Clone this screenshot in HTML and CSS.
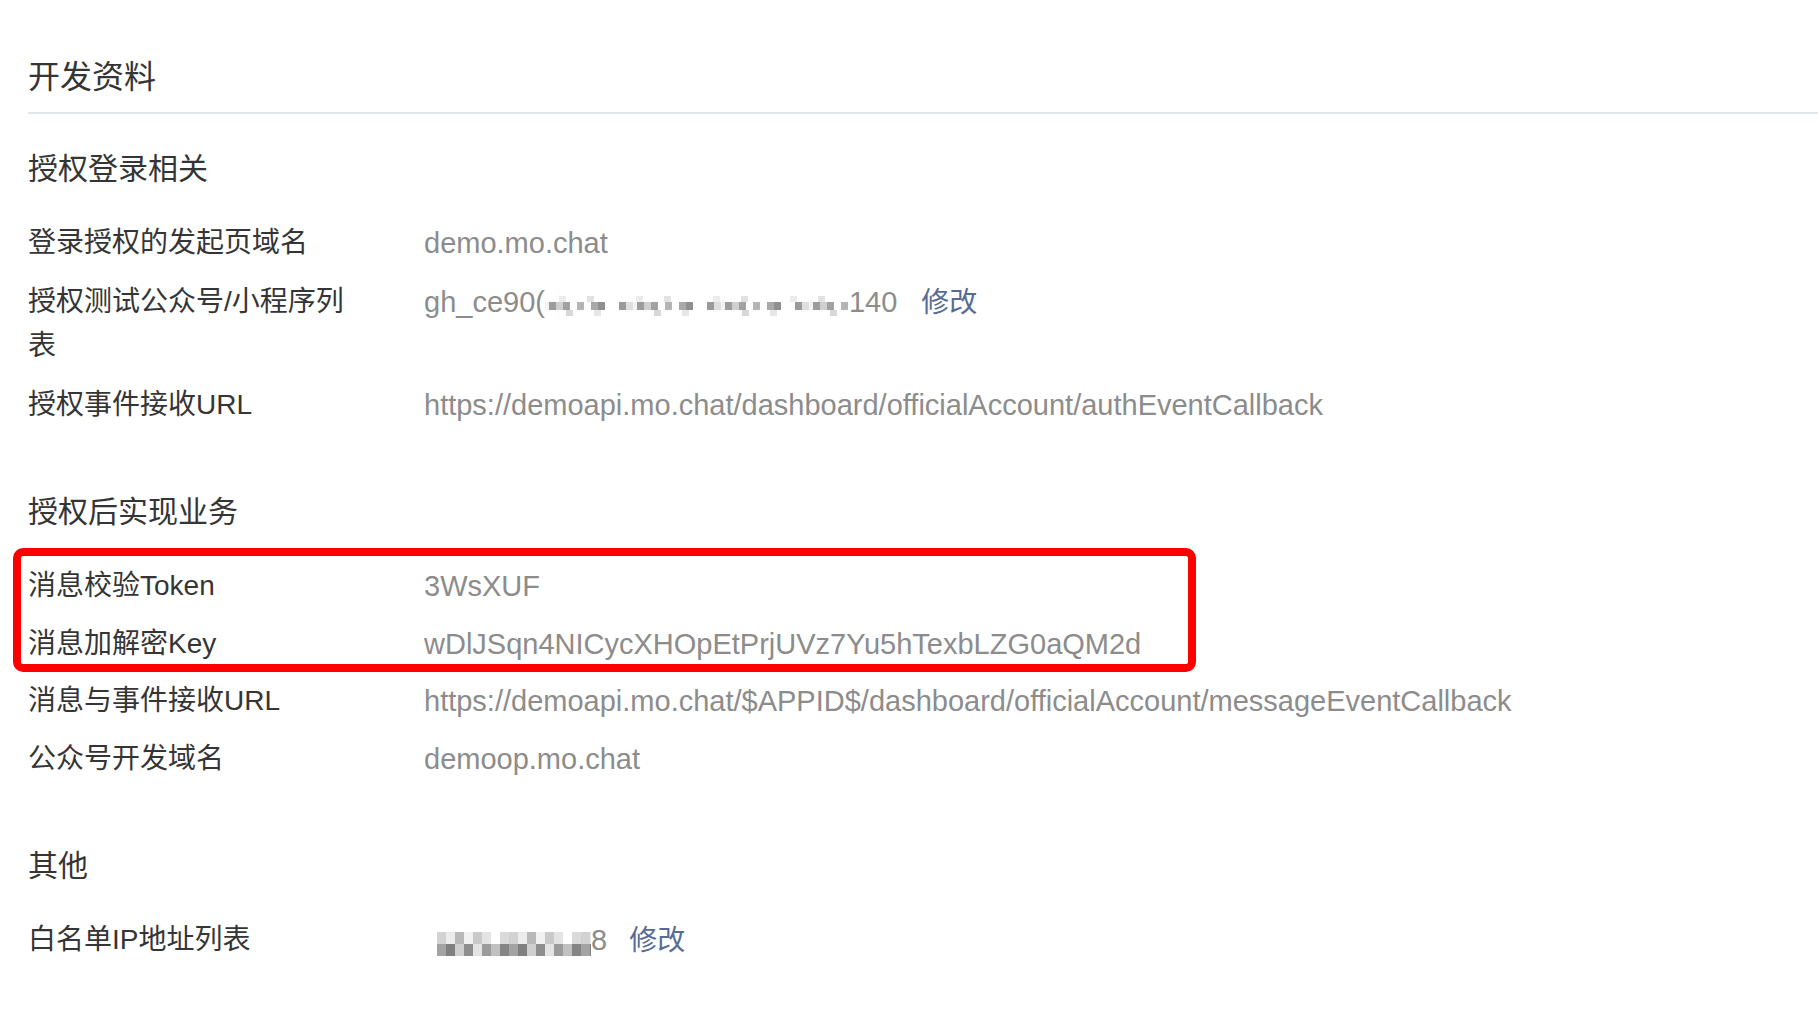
FILE: index.html
```html
<!DOCTYPE html>
<html lang="zh-CN">
<head>
<meta charset="utf-8">
<title>开发资料</title>
<link rel="stylesheet" href="styles.css">
</head>
<body>
<div class="page">
  <h1 class="title">开发资料</h1>
  <div class="divider"></div>

  <section class="section first">
    <h2 class="section-title">授权登录相关</h2>
    <div class="rows loose">
      <div class="row">
        <div class="label">登录授权的发起页域名</div>
        <div class="value">demo.mo.chat</div>
      </div>
      <div class="row">
        <div class="label">授权测试公众号/小程序列表</div>
        <div class="value">gh_ce90(<span class="mosaic mosaic-id"></span>140<a class="link link-id" href="#">修改</a></div>
      </div>
      <div class="row">
        <div class="label">授权事件接收URL</div>
        <div class="value">https://demoapi.mo.chat/dashboard/officialAccount/authEventCallback</div>
      </div>
    </div>
  </section>

  <section class="section">
    <h2 class="section-title">授权后实现业务</h2>
    <div class="rows tight">
      <div class="highlight">
        <div class="row">
          <div class="label">消息校验Token</div>
          <div class="value">3WsXUF</div>
        </div>
        <div class="row">
          <div class="label">消息加解密Key</div>
          <div class="value">wDlJSqn4NICycXHOpEtPrjUVz7Yu5hTexbLZG0aQM2d</div>
        </div>
      </div>
      <div class="row">
        <div class="label">消息与事件接收URL</div>
        <div class="value">https://demoapi.mo.chat/$APPID$/dashboard/officialAccount/messageEventCallback</div>
      </div>
      <div class="row">
        <div class="label">公众号开发域名</div>
        <div class="value">demoop.mo.chat</div>
      </div>
    </div>
  </section>

  <section class="section">
    <h2 class="section-title">其他</h2>
    <div class="rows">
      <div class="row">
        <div class="label">白名单IP地址列表</div>
        <div class="value"><span class="mosaic mosaic-ip"></span>8<a class="link link-ip" href="#">修改</a></div>
      </div>
    </div>
  </section>
</div>
</body>
</html>
```

FILE: styles.css
```css
html, body {
  margin: 0;
  padding: 0;
  background: #ffffff;
}

body {
  font-family: "Liberation Sans", "Noto Sans CJK SC", sans-serif;
  color: #353535;
}

.page {
  padding: 55px 0 40px 28px;
}

.title {
  margin: 0 0 13px;
  font-size: 32px;
  line-height: 44px;
  font-weight: 400;
  color: #353535;
}

.divider {
  height: 2px;
  background: #e3e6e8;
}

.section {
  margin-top: 63px;
}

.section.first {
  margin-top: 33px;
}

.section-title {
  margin: 0 0 30px;
  font-size: 30px;
  line-height: 44px;
  font-weight: 400;
  color: #353535;
}

.rows {
  display: flex;
  flex-direction: column;
  gap: 14px;
}

.rows.loose {
  gap: 15px;
}

.rows.tight {
  gap: 13.5px;
}

.highlight {
  position: relative;
  display: flex;
  flex-direction: column;
  gap: 13.5px;
}

.highlight::before {
  content: "";
  position: absolute;
  left: -15px;
  top: -16px;
  width: 1183px;
  height: 124px;
  box-sizing: border-box;
  border: 8px solid #fe0000;
  border-radius: 10px;
  pointer-events: none;
}

.row {
  display: grid;
  grid-template-columns: 340px 1fr;
  column-gap: 56px;
  font-size: 28px;
  line-height: 44px;
}

.label {
  color: #353535;
}

.value {
  color: #8c8c8c;
  font-size: 29px;
  white-space: nowrap;
}

.link {
  color: #576b95;
  font-size: 28px;
  text-decoration: none;
}

.link-id {
  margin-left: 24px;
}

.link-ip {
  margin-left: 22px;
}

.mosaic {
  display: inline-block;
  vertical-align: -4px;
}

.mosaic-id {
  width: 304px;
  height: 20px;
  background:
    repeating-linear-gradient(90deg, #ffffff 0 14px, #ececec 14px 21px, #ffffff 21px 42px, #e2e2e2 42px 49px, #ffffff 49px 77px) 0 0 / 100% 6px no-repeat,
    repeating-linear-gradient(90deg, #f3f3f3 0 4px, #9c9c9c 4px 11px, #cfcfcf 11px 18px, #a2a2a2 18px 25px, #ffffff 25px 32px, #b4b4b4 32px 39px, #ffffff 39px 46px, #a9a9a9 46px 53px, #8f8f8f 53px 60px, #ffffff 60px 74px, #9a9a9a 74px 81px, #dedede 81px 88px) 0 6px / 100% 8px no-repeat,
    repeating-linear-gradient(90deg, #ffffff 0 21px, #d8d8d8 21px 28px, #ffffff 28px 49px, #e6e6e6 49px 56px, #ffffff 56px 88px) 0 14px / 100% 6px no-repeat;
}

.mosaic-ip {
  width: 154px;
  height: 24px;
  margin-left: 13px;
  vertical-align: -6px;
  background:
    repeating-linear-gradient(90deg, #d2d2d2 0 9px, #ebebeb 9px 18px, #b8b8b8 18px 27px, #f1f1f1 27px 36px, #c9c9c9 36px 45px, #e4e4e4 45px 54px, #ffffff 54px 63px, #dadada 63px 72px) 0 0 / 100% 12px no-repeat,
    repeating-linear-gradient(90deg, #a3a3a3 0 9px, #7f7f7f 9px 18px, #cfcfcf 18px 27px, #8e8e8e 27px 36px, #e3e3e3 36px 45px, #9b9b9b 45px 54px, #c1c1c1 54px 63px, #858585 63px 72px) 0 12px / 100% 12px no-repeat;
}
```
